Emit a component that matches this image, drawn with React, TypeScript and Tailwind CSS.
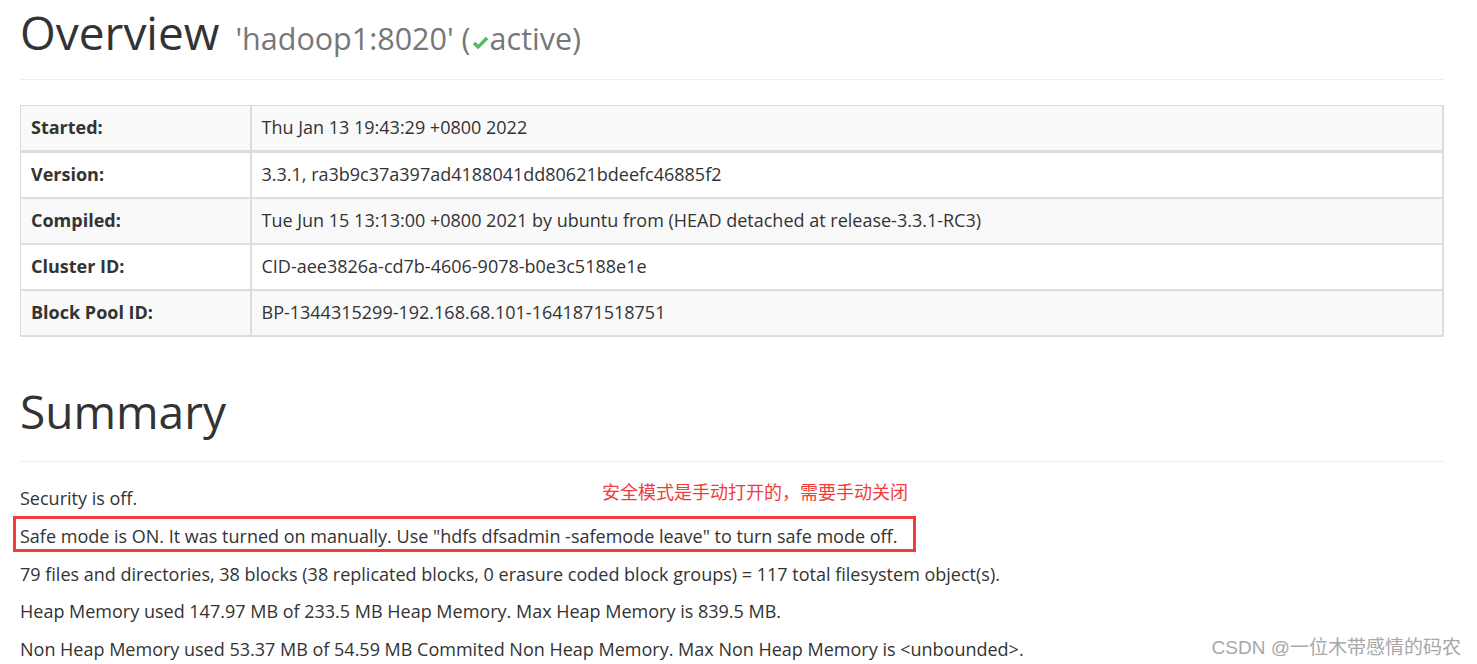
const rows = [
  { label: "Started:", value: "Thu Jan 13 19:43:29 +0800 2022" },
  { label: "Version:", value: "3.3.1, ra3b9c37a397ad4188041dd80621bdeefc46885f2" },
  {
    label: "Compiled:",
    value: "Tue Jun 15 13:13:00 +0800 2021 by ubuntu from (HEAD detached at release-3.3.1-RC3)",
  },
  { label: "Cluster ID:", value: "CID-aee3826a-cd7b-4606-9078-b0e3c5188e1e" },
  { label: "Block Pool ID:", value: "BP-1344315299-192.168.68.101-1641871518751" },
];

const CheckIcon = () => (
  <svg viewBox="0 0 16 16" className="inline-block h-[18px] w-[18px] align-[-2px] mr-[1px]">
    <path d="M1.5 9.2 L4 6.8 L6.4 9.3 L13.2 2.5 L15.4 4.7 L6.4 13.6 Z" fill="#5cb85c" />
  </svg>
);

export default function App() {
  return (
    <div
      className="relative min-h-[664px] w-[1477px] overflow-hidden bg-white text-[#333]"
      style={{ fontFamily: "'Open Sans', 'Noto Sans', sans-serif" }}
    >
      <div className="w-[1444px] pl-[20px]">
        {/* overview header */}
        <div className="border-b border-[#eee] pt-[3px] pb-[16px]">
          <h1 className="text-[46px] leading-[1.3] font-normal">
            Overview{" "}
            <span className="ml-[4px] text-[30.5px] text-[#777]">
              'hadoop1:8020' (<CheckIcon />active)
            </span>
          </h1>
        </div>

        <table className="mt-[25px] w-full border-collapse text-[18px] leading-[25px]">
          <tbody>
            {rows.map((r, i) => (
              <tr key={r.label} className={i % 2 === 0 ? "bg-[#f9f9f9]" : "bg-white"}>
                <th
                  className={`w-[230px] border-[#ddd] border-l border-r-2 px-[10px] py-[9.5px] text-left font-bold ${
                    i === 0 ? "border-t border-b-[3px]" : "border-b-2"
                  }`}
                >
                  {r.label}
                </th>
                <td
                  className={`border-[#ddd] border-r-2 px-[10px] py-[9.5px] ${
                    i === 0 ? "border-t border-b-[3px]" : "border-b-2"
                  }`}
                >
                  {r.value}
                </td>
              </tr>
            ))}
          </tbody>
        </table>

        {/* summary header */}
        <div className="mt-[45px] border-b border-[#eee] pb-[19px]">
          <h1 className="text-[46px] leading-[1.3] font-normal">Summary</h1>
        </div>

        <div className="mt-[24.5px] text-[18px] leading-[25px]">
          <p className="mb-[12.75px]">Security is off.</p>
          <p className="relative mb-[12.75px]">
            Safe mode is ON. It was turned on manually. Use "hdfs dfsadmin -safemode leave" to turn safe mode off.
            <span className="pointer-events-none absolute left-[-7px] top-[-8px] h-[36px] w-[903px] border-[3px] border-[#f23b3b]" />
            <span
              className="absolute left-[582px] top-[-45px] whitespace-nowrap text-[18px] text-[#f23b3b]"
              style={{ fontFamily: "'Noto Sans CJK SC', sans-serif" }}
            >
              安全模式是手动打开的，需要手动关闭
            </span>
          </p>
          <p className="mb-[12.75px]">
            79 files and directories, 38 blocks (38 replicated blocks, 0 erasure coded block groups) = 117 total filesystem object(s).
          </p>
          <p className="mb-[12.75px]">Heap Memory used 147.97 MB of 233.5 MB Heap Memory. Max Heap Memory is 839.5 MB.</p>
          <p className="mb-[12.75px]">
            Non Heap Memory used 53.37 MB of 54.59 MB Commited Non Heap Memory. Max Non Heap Memory is &lt;unbounded&gt;.
          </p>
        </div>
      </div>

      <div
        className="absolute right-[16px] bottom-[12px] text-[19px] text-[#a8a8a8]"
        style={{ fontFamily: "'Liberation Sans', 'Noto Sans CJK SC', sans-serif" }}
      >
        CSDN @一位木带感情的码农
      </div>
    </div>
  );
}
